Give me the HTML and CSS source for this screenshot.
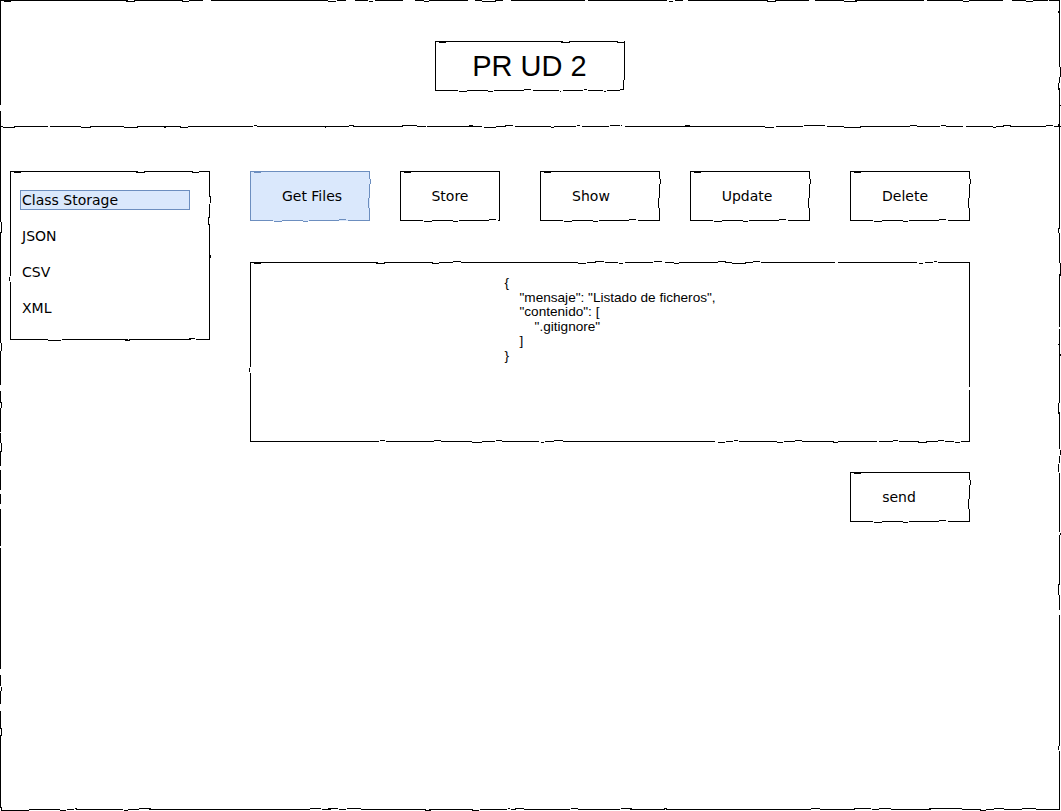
FILE: index.html
```html
<!DOCTYPE html>
<html lang="es">
<head>
    <meta charset="UTF-8">
    <meta name="viewport" content="width=device-width, initial-scale=1.0">
    <title>PR UD 2</title>
    <link rel="stylesheet" href="styles.css">
</head>
<body>

    <!-- filtro para el trazo "a mano" -->
    <svg class="defs" aria-hidden="true">
        <filter id="rough" x="-5%" y="-5%" width="110%" height="110%">
            <feTurbulence type="fractalNoise" baseFrequency="0.05" numOctaves="2" seed="4" result="noise"/>
            <feDisplacementMap in="SourceGraphic" in2="noise" scale="3" result="moved"/>
            <feGaussianBlur in="moved" stdDeviation="0.5" result="soft"/>
            <feComponentTransfer in="soft">
                <feFuncA type="linear" slope="2.8"/>
            </feComponentTransfer>
        </filter>
    </svg>

    <div class="frame sketch">
        <header class="header sketch-bottom">
            <div class="title sketch">PR UD 2</div>
        </header>

        <main class="main">
            <aside class="sidebar sketch">
                <div class="item selected">Class Storage</div>
                <div class="item">JSON</div>
                <div class="item">CSV</div>
                <div class="item">XML</div>
            </aside>

            <section class="content">
                <div class="actions">
                    <button class="btn sketch active w-get">Get Files</button>
                    <button class="btn sketch w-store">Store</button>
                    <button class="btn sketch w-show">Show</button>
                    <button class="btn sketch w-update">Update</button>
                    <button class="btn sketch w-delete">Delete</button>
                </div>

                <div class="output sketch">
<pre class="json">{
    "mensaje": "Listado de ficheros",
    "contenido": [
        ".gitignore"
    ]
}</pre>
                </div>

                <button class="btn sketch send">send</button>
            </section>
        </main>
    </div>

</body>
</html>
```

FILE: styles.css
```css
* {
    box-sizing: border-box;
    margin: 0;
    padding: 0;
}

body {
    font-family: 'DejaVu Sans', Verdana, sans-serif;
    background-color: #ffffff;
    color: #111;
    overflow: hidden;
}

.defs {
    position: absolute;
    width: 0;
    height: 0;
}

/* borde dibujado a mano */
.sketch {
    position: relative;
}

.sketch::before {
    content: "";
    position: absolute;
    inset: 0;
    border: 1.3px solid #000;
    filter: url(#rough);
    pointer-events: none;
}

.sketch-bottom {
    position: relative;
}

.sketch-bottom::after {
    content: "";
    position: absolute;
    left: 0;
    right: 0;
    bottom: 0;
    height: 4px;
    border-bottom: 1.3px solid #000;
    filter: url(#rough);
}

.frame {
    width: 1061px;
    height: 811px;
}

.frame::before {
    inset: 0 1px 1px 0;
}

.header {
    height: 127px;
    display: flex;
    justify-content: center;
    padding-top: 41px;
}

.title {
    width: 190px;
    height: 50px;
    margin-left: -2px;
    display: flex;
    justify-content: center;
    align-items: center;
    font-family: 'Liberation Sans', Arial, sans-serif;
    font-size: 29px;
    color: #000;
}

.main {
    display: flex;
    align-items: flex-start;
    padding: 44px 0 0 10px;
}

.sidebar {
    width: 200px;
    height: 169px;
    padding: 19px 0 0 10px;
}

.item {
    width: 170px;
    height: 20px;
    line-height: 20px;
    padding-left: 2px;
    margin-bottom: 16px;
    font-size: 14px;
    color: #000;
}

.item.selected {
    background-color: #dae8fc;
    border: 1px solid #6c8ebf;
    line-height: 18px;
    padding-left: 1px;
}

.content {
    width: 720px;
    margin-left: 40px;
    display: flex;
    flex-direction: column;
}

.actions {
    display: flex;
    height: 50px;
}

.btn {
    height: 50px;
    border: none;
    background: #fff;
    font-family: 'DejaVu Sans', Verdana, sans-serif;
    font-size: 14px;
    color: #000;
}

.btn.active {
    background-color: #dae8fc;
}

.btn.active::before {
    border-color: #6c8ebf;
}

.w-get { width: 120px; padding-left: 4px; }
.w-store { width: 100px; margin-left: 30px; }
.w-show { width: 120px; margin-left: 40px; padding-right: 18px; }
.w-update { width: 120px; margin-left: 30px; padding-right: 6px; }
.w-delete { width: 120px; margin-left: 40px; padding-right: 10px; }

.output {
    margin-top: 41px;
    height: 180px;
    display: flex;
    justify-content: center;
    padding-top: 14px;
}

.json {
    font-family: 'Liberation Sans', Arial, sans-serif;
    font-size: 13.6px;
    line-height: 14.5px;
    color: #000;
}

.send {
    align-self: flex-end;
    width: 120px;
    margin-top: 30px;
    padding-right: 22px;
}
```
